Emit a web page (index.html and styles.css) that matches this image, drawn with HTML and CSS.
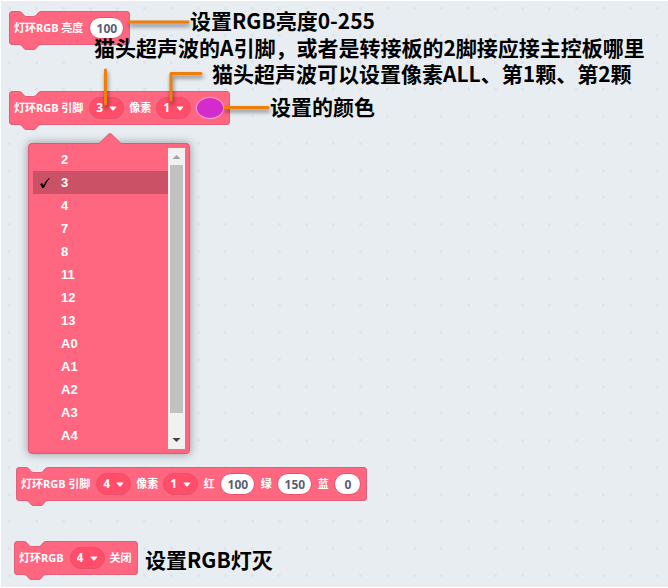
FILE: index.html
```html
<!DOCTYPE html>
<html lang="zh-CN">
<head>
<meta charset="utf-8">
<meta name="viewport" content="width=device-width, initial-scale=1">
<title>灯环RGB</title>
<link rel="stylesheet" href="styles.css">
</head>
<body>
<svg class="defs" width="0" height="0" aria-hidden="true">
  <symbol id="notch" viewBox="0 0 22 6">
    <path class="notch-fill" d="M0 0H22V.5C18 .5 18 5.500 15 5.500H7C4 5.500 4 .5 0 .5Z"/>
    <path class="notch-line" d="M0 .5C4 .5 4 5.500 7 5.500H15C18 5.500 18 .5 22 .5"/>
  </symbol>
  <symbol id="tab" viewBox="0 0 22 7">
    <path class="tab-fill" d="M0 0H22V1.500C18 1.500 18 6.500 15 6.500H7C4 6.500 4 1.500 0 1.500Z"/>
    <path class="notch-line" d="M0 1.500C4 1.500 4 6.500 7 6.500H15C18 6.500 18 1.500 22 1.500"/>
  </symbol>
  <symbol id="caret" viewBox="0 0 8 5">
    <path d="M1.200 .5H6.800Q7.800 .7 7.100 1.600L4.600 4.200Q4 4.700 3.400 4.200L.9 1.600Q.2 .7 1.200 .5Z" fill="#fff"/>
  </symbol>
</svg>
<main class="workspace">
  <div class="block block-brightness">
    <svg class="notch" aria-hidden="true"><use href="#notch"/></svg>
    <label for="brightness">灯环RGB 亮度</label>
    <input class="pill number" id="brightness" type="text" value="100">
    <svg class="tab" aria-hidden="true"><use href="#tab"/></svg>
  </div>

  <div class="block block-color">
    <svg class="notch" aria-hidden="true"><use href="#notch"/></svg>
    <label for="pin">灯环RGB 引脚</label>
    <button class="pill choice" id="pin" type="button" aria-haspopup="listbox" aria-expanded="true">3<svg class="caret" aria-hidden="true"><use href="#caret"/></svg></button>
    <label for="pixel">像素</label>
    <span class="choice-wrap"><select class="pill choice" id="pixel"><option>1</option></select><svg class="caret" aria-hidden="true"><use href="#caret"/></svg></span>
    <input class="swatch" type="color" value="#d42bcb" aria-label="颜色">
    <svg class="tab" aria-hidden="true"><use href="#tab"/></svg>
  </div>

  <div class="menu">
    <svg class="menu-arrow" width="22" height="12" viewBox="0 0 22 12" aria-hidden="true"><path d="M0 12V10.500L9.500 1.200Q11 0 12.500 1.200L22 10.500V12Z" fill="#ff6680"/><path d="M0 10.500L9.500 1.200Q11 0 12.500 1.200L22 10.500" fill="none" stroke="#dd5a72"/></svg>
    <ul class="options" role="listbox" aria-labelledby="pin">
      <li role="option">2</li>
      <li role="option" class="selected" aria-selected="true"><svg class="check" width="12" height="12" viewBox="0 0 12 12" aria-hidden="true"><path d="M1 7.200L3 6.100L4.300 8.300Q7 3.200 10.300 .7L10.700 1.200Q7.500 4.600 5 10.700L3.300 11.300Q2.500 8.600 1 7.200Z"/></svg>3</li>
      <li role="option">4</li>
      <li role="option">7</li>
      <li role="option">8</li>
      <li role="option">11</li>
      <li role="option">12</li>
      <li role="option">13</li>
      <li role="option">A0</li>
      <li role="option">A1</li>
      <li role="option">A2</li>
      <li role="option">A3</li>
      <li role="option">A4</li>
    </ul>
    <div class="scrollbar" aria-hidden="true">
      <svg width="17" height="17" viewBox="0 0 17 17"><path d="M4.500 11L8.500 7L12.500 11Z" fill="#a3a3a3"/></svg>
      <div class="thumb"></div>
      <svg width="17" height="17" viewBox="0 0 17 17"><path d="M4.500 6L8.500 10L12.500 6Z" fill="#404040"/></svg>
    </div>
  </div>

  <div class="block block-rgb">
    <svg class="notch" aria-hidden="true"><use href="#notch"/></svg>
    <label for="pin-rgb">灯环RGB 引脚</label>
    <span class="choice-wrap"><select class="pill choice" id="pin-rgb"><option>4</option></select><svg class="caret" aria-hidden="true"><use href="#caret"/></svg></span>
    <label for="pixel-rgb">像素</label>
    <span class="choice-wrap"><select class="pill choice" id="pixel-rgb"><option>1</option></select><svg class="caret" aria-hidden="true"><use href="#caret"/></svg></span>
    <label for="red">红</label>
    <input class="pill number" id="red" type="text" value="100">
    <label for="green">绿</label>
    <input class="pill number" id="green" type="text" value="150">
    <label for="blue">蓝</label>
    <input class="pill number short" id="blue" type="text" value="0">
    <svg class="tab" aria-hidden="true"><use href="#tab"/></svg>
  </div>

  <div class="block block-off">
    <svg class="notch" aria-hidden="true"><use href="#notch"/></svg>
    <label for="pin-off">灯环RGB</label>
    <span class="choice-wrap"><select class="pill choice" id="pin-off"><option>4</option></select><svg class="caret" aria-hidden="true"><use href="#caret"/></svg></span>
    <span>关闭</span>
    <svg class="tab" aria-hidden="true"><use href="#tab"/></svg>
  </div>

  <svg class="connectors" width="300" height="140" viewBox="0 0 300 140" aria-hidden="true">
    <path d="M129 22H188"/>
    <path d="M105.500 70V104"/>
    <path d="M171 100V73.500H201"/>
    <path d="M225 107.500H268"/>
  </svg>

  <p class="note note-brightness">设置RGB亮度0-255</p>
  <p class="note note-pin">猫头超声波的A引脚，或者是转接板的2脚接应接主控板哪里</p>
  <p class="note note-pixel">猫头超声波可以设置像素ALL、第1颗、第2颗</p>
  <p class="note note-color">设置的颜色</p>
  <p class="note note-off">设置RGB灯灭</p>
</main>
</body>
</html>
```
FILE: styles.css
```css
* {
  box-sizing: border-box;
}

body {
  margin: 0;
  background: #fff;
  font-family: "Noto Sans", "Noto Sans CJK SC", sans-serif;
}

.defs {
  position: absolute;
}

.workspace {
  position: relative;
  min-height: 100vh;
  overflow: hidden;
  border: solid #fff;
  border-width: 1px 0 1px 1px;
  background: #e8edf1 radial-gradient(circle, #dfe2e7 1px, transparent 2px) -5px -6px / 27px 27px;
}

/* Blocks */

.block {
  position: absolute;
  display: flex;
  align-items: center;
  gap: 5px;
  height: 34px;
  padding: 0 5px 0 4px;
  border: 1px solid #e0607a;
  border-radius: 3px;
  background: #ff6680;
  color: #fff;
  font-size: 11px;
  font-weight: 700;
  line-height: 16px;
  white-space: nowrap;
}

.block label {
  min-width: 12px;
  text-align: center;
}

.block label:first-of-type {
  margin-right: 1px;
}

.block-brightness { left: 8px; top: 10px; }
.block-color { left: 8px; top: 90px; }
.block-rgb { left: 15px; top: 466px; }
.block-off { left: 13px; top: 540px; }

.notch,
.tab {
  position: absolute;
  left: 9px;
  width: 22px;
}

.notch {
  top: -1px;
  height: 6px;
}

.tab {
  top: 31px;
  height: 7px;
}

.notch-fill { fill: #e8edf1; }
.tab-fill { fill: #ff6680; }

.notch-line {
  fill: none;
  stroke: #e0607a;
}

.pill {
  appearance: none;
  width: 35px;
  height: 22px;
  margin: 0;
  border: 1px solid #e8506b;
  border-radius: 11px;
  font: inherit;
  font-size: 12px;
}

.number {
  padding: 0;
  background: #fff;
  color: #575e75;
  text-align: center;
}

.number.short {
  width: 27px;
}

.choice {
  position: relative;
  display: block;
  padding: 0 0 0 6px;
  background: #ff4d6a;
  color: #fff;
  text-align: left;
}

.choice-wrap {
  position: relative;
}

.caret {
  position: absolute;
  right: 7px;
  top: 9px;
  width: 8px;
  height: 5px;
  pointer-events: none;
}

.choice > .caret {
  right: 6px;
  top: 8px;
}

.swatch {
  appearance: none;
  width: 28px;
  height: 22px;
  padding: 0;
  overflow: hidden;
  border: 1px solid #f0a5e6;
  border-radius: 50%;
  background: #d42bcb;
}

.swatch::-webkit-color-swatch-wrapper {
  padding: 0;
}

.swatch::-webkit-color-swatch {
  border: 0;
}

/* Open pin menu */

.menu {
  position: absolute;
  left: 27px;
  top: 142px;
  display: flex;
  width: 162px;
  padding: 4px;
  border: 1px solid #dd5a72;
  border-radius: 4px;
  background: #ff6680;
  box-shadow: 0 0 8px 1px rgba(0, 0, 0, 0.3);
}

.menu-arrow {
  position: absolute;
  left: 70px;
  top: -11px;
}

.options {
  flex: 1;
  margin: 0;
  padding: 0 0 2px;
  list-style: none;
  color: #fff;
  font: 700 13px/23px "Liberation Sans", sans-serif;
}

.options li {
  position: relative;
  padding-left: 28px;
}

.options .selected {
  background: #cb5166;
}

.check {
  position: absolute;
  left: 6px;
  top: 6px;
}

.scrollbar {
  display: flex;
  flex-direction: column;
  width: 17px;
  background: #f1f1f1;
}

.thumb {
  height: 248px;
  margin: 0 2px auto;
  background: #c1c1c1;
}

/* Annotations */

.connectors {
  position: absolute;
  left: -1px;
  top: -1px;
  pointer-events: none;
  fill: none;
  stroke: #f07f09;
  stroke-width: 3;
  stroke-linecap: round;
  stroke-linejoin: round;
  filter: drop-shadow(1px 3px 2px rgba(0, 0, 0, 0.5));
}

.note {
  position: absolute;
  margin: 0;
  color: #000;
  font-family: "Noto Sans CJK SC", sans-serif;
  font-size: 21px;
  font-weight: 700;
  line-height: 26px;
  white-space: nowrap;
}

.note-brightness { left: 189px; top: 6px; }
.note-pin { left: 93px; top: 33px; }
.note-pixel { left: 211px; top: 59px; }
.note-color { left: 269px; top: 92px; }
.note-off { left: 144px; top: 545px; }
```
